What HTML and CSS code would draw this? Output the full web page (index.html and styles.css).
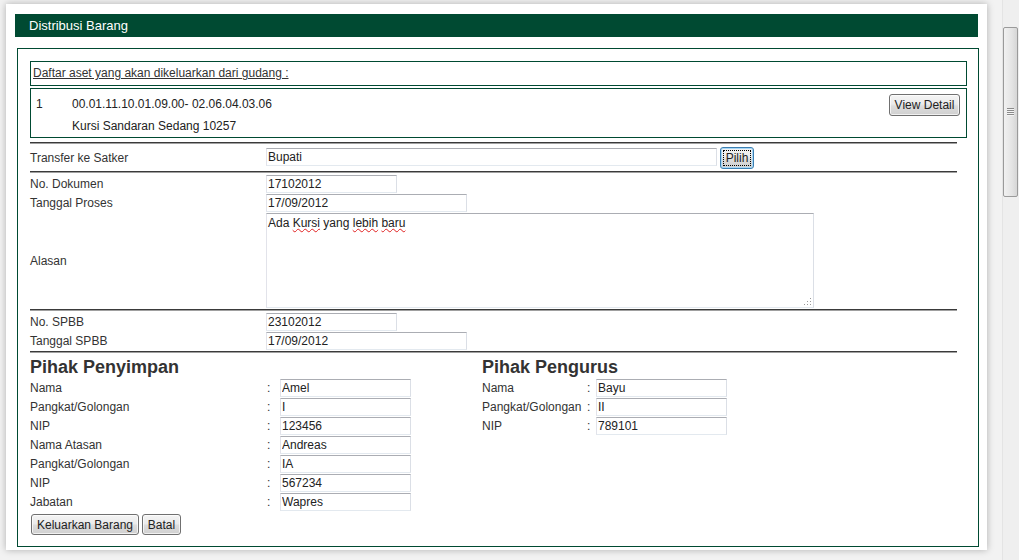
FILE: index.html
```html
<!DOCTYPE html>
<html lang="id">
<head>
  <meta charset="UTF-8" />
  <meta name="viewport" content="width=device-width, initial-scale=1.0"/>
  <title>Distribusi Barang</title>
  <link rel="stylesheet" href="styles.css">
</head>
<body>
  <div class="viewport">
    <div class="panel">
      <div class="panel-title">Distribusi Barang</div>
      <div class="panel-body">
        <div class="asset-head">Daftar aset yang akan dikeluarkan dari gudang :</div>
        <div class="asset-list">
          <div class="asset-no">1</div>
          <div class="asset-info">
            <div>00.01.11.10.01.09.00- 02.06.04.03.06</div>
            <div>Kursi Sandaran Sedang 10257</div>
          </div>
          <button class="btn btn-detail">View Detail</button>
        </div>

        <div class="form">
          <hr class="first">
          <div class="row row-transfer">
            <label>Transfer ke Satker</label>
            <input class="w-long" value="Bupati">
            <button class="btn btn-pilih">Pilih</button>
          </div>
          <hr>
          <div class="rows">
            <div class="row"><label>No. Dokumen</label><input class="w-short" value="17102012"></div>
            <div class="row"><label>Tanggal Proses</label><input class="w-mid" value="17/09/2012"></div>
            <div class="row row-area">
              <label>Alasan</label>
              <div class="textarea">
                <div class="area-text">Ada <span class="sp">Kursi</span> yang <span class="sp">lebih</span> <span class="sp">baru</span>&nbsp;</div>
                <svg class="grip" width="10" height="9" viewBox="0 0 10 9">
                  <rect x="8" y="1" width="1" height="1" fill="#999"/>
                  <rect x="5" y="4" width="1" height="1" fill="#999"/>
                  <rect x="8" y="4" width="1" height="1" fill="#999"/>
                  <rect x="2" y="7" width="1" height="1" fill="#999"/>
                  <rect x="5" y="7" width="1" height="1" fill="#999"/>
                  <rect x="8" y="7" width="1" height="1" fill="#999"/>
                </svg>
              </div>
            </div>
          </div>
          <hr>
          <div class="rows">
            <div class="row"><label>No. SPBB</label><input class="w-short" value="23102012"></div>
            <div class="row"><label>Tanggal SPBB</label><input class="w-mid" value="17/09/2012"></div>
          </div>
          <hr>

          <div class="parties">
            <div class="party party-left">
              <h3>Pihak Penyimpan</h3>
              <div class="party-rows">
                <label>Nama</label><span class="colon">:</span><input value="Amel">
                <label>Pangkat/Golongan</label><span class="colon">:</span><input value="I">
                <label>NIP</label><span class="colon">:</span><input value="123456">
                <label>Nama Atasan</label><span class="colon">:</span><input value="Andreas">
                <label>Pangkat/Golongan</label><span class="colon">:</span><input value="IA">
                <label>NIP</label><span class="colon">:</span><input value="567234">
                <label>Jabatan</label><span class="colon">:</span><input value="Wapres">
              </div>
            </div>
            <div class="party party-right">
              <h3>Pihak Pengurus</h3>
              <div class="party-rows">
                <label>Nama</label><span class="colon">:</span><input value="Bayu">
                <label>Pangkat/Golongan</label><span class="colon">:</span><input value="II">
                <label>NIP</label><span class="colon">:</span><input value="789101">
              </div>
            </div>
          </div>

          <div class="actions">
            <button class="btn btn-submit">Keluarkan Barang</button>
            <button class="btn btn-cancel">Batal</button>
          </div>
        </div>
      </div>
    </div>
  </div>

  <div class="scrollbar">
    <div class="thumb"><div class="thumb-grip"></div></div>
  </div>
</body>
</html>
```

FILE: styles.css
```css
* {
  box-sizing: border-box;
}
html, body {
  margin: 0;
  height: 100%;
  overflow: hidden;
}
body {
  display: flex;
  font-family: "Liberation Sans", Arial, sans-serif;
  font-size: 12px;
  color: #333;
  background: #f2f2f2;
}
.viewport {
  flex: 1;
  padding: 4px 0 0 6px;
}
.panel {
  width: 981px;
  height: 546px;
  background: #fff;
  box-shadow: 0 0 7px rgba(0, 0, 0, 0.28);
  padding: 10px 0 0 9px;
}
.panel-title {
  width: 963px;
  height: 23px;
  background: #004a32;
  color: #fff;
  font-size: 13px;
  line-height: 23px;
  padding-left: 14px;
}
.panel-body {
  width: 962px;
  height: 499px;
  margin: 11px 0 0 2px;
  border: 1px solid #004a32;
  padding: 12px 11px 0 12px;
}
.asset-head {
  height: 25px;
  border: 1px solid #004a32;
  padding-left: 2px;
  line-height: 23px;
  text-decoration: underline;
}
.asset-list {
  display: flex;
  align-items: flex-start;
  height: 50px;
  margin-top: 2px;
  border: 1px solid #004a32;
  padding: 4px 6px 0 5px;
  line-height: 22px;
  color: #222;
}
.asset-no {
  width: 36px;
}
.asset-info {
  flex: 1;
}

.btn {
  font-family: "Liberation Sans", Arial, sans-serif;
  font-size: 12px;
  line-height: 14px;
  color: #222;
  height: 21px;
  padding: 0;
  white-space: nowrap;
  text-align: center;
  border: 1px solid #707070;
  border-radius: 3px;
  background: linear-gradient(#f4f4f4, #ebebeb 45%, #dcdcdc 55%, #d0d0d0);
  box-shadow: inset 0 0 0 1px rgba(255, 255, 255, 0.7);
}
.btn-detail {
  width: 71px;
  height: 22px;
  margin-top: 1px;
}
.btn-pilih {
  width: 34px;
  height: 22px;
  margin-left: 3px;
  border-color: #3c7fb1;
  box-shadow: inset 0 0 0 1px #a8d8f8;
  outline: 1px dotted #000;
  outline-offset: -4px;
}
.btn-submit {
  width: 108px;
}
.btn-cancel {
  width: 39px;
  margin-left: 3px;
}

.form hr {
  width: 927px;
  height: 2px;
  margin: 1px 0 2px;
  border: 0;
  border-top: 1px solid #3a3a3a;
  border-bottom: 1px solid #a0a0a0;
}
.form hr.first {
  margin-top: 4px;
}
.rows {
  display: flex;
  flex-direction: column;
  gap: 1px;
}
.row {
  display: flex;
  align-items: center;
}
.row label {
  width: 236px;
  line-height: 18px;
}
.row-transfer {
  align-items: flex-start;
  padding: 1px 0;
}
.row-transfer label {
  margin-top: 2px;
}
.row-transfer input {
  margin-top: 1px;
}

input {
  height: 18px;
  padding: 0 1px;
  font-family: "Liberation Sans", Arial, sans-serif;
  font-size: 12px;
  color: #222;
  border: 1px solid;
  border-color: #abadb3 #dbdfe6 #e3e9ef #e2e3ea;
  background: #fff;
}
.w-short {
  width: 131px;
}
.w-mid {
  width: 201px;
}
.w-long {
  width: 451px;
}

.textarea {
  position: relative;
  width: 548px;
  height: 95px;
  padding: 2px 1px;
  line-height: 15px;
  color: #222;
  border: 1px solid;
  border-color: #abadb3 #dbdfe6 #e3e9ef #e2e3ea;
}
.sp {
  text-decoration-line: underline;
  text-decoration-style: wavy;
  text-decoration-color: #e02020;
  text-decoration-thickness: 1px;
  text-underline-offset: 1px;
  text-decoration-skip-ink: none;
}
.grip {
  position: absolute;
  right: 1px;
  bottom: 1px;
}

.parties {
  display: flex;
}
.party-left {
  width: 452px;
}
.party h3 {
  margin: 2px 0 1px;
  font-size: 18px;
  line-height: 21px;
  font-weight: bold;
}
.party-rows {
  display: grid;
  row-gap: 1px;
  grid-auto-rows: 18px;
  line-height: 18px;
}
.party-left .party-rows {
  grid-template-columns: 237px 13px 131px;
}
.party-right .party-rows {
  grid-template-columns: 105px 9px 131px;
}
.party-rows input {
  width: 131px;
}
.actions {
  display: flex;
  margin: 3px 0 0 1px;
}

.scrollbar {
  width: 17px;
  background: #efefef;
  border-left: 1px solid #e4e4e4;
  padding-top: 27px;
}
.thumb {
  display: flex;
  align-items: center;
  justify-content: center;
  width: 15px;
  height: 170px;
  border: 1px solid #9a9a9a;
  border-radius: 2px;
  background: linear-gradient(to right, #f1f1f1, #e4e4e4 60%, #d6d6d6);
}
.thumb-grip {
  width: 7px;
  height: 8px;
  background: repeating-linear-gradient(#8a8a8a 0 1px, #f4f4f4 1px 2px);
}
```
